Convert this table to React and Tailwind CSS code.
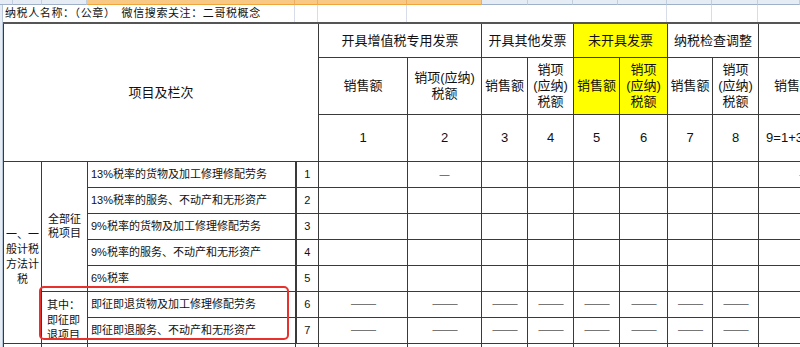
const colWidths = [38, 46, 208, 23, 89, 74, 46, 46, 46, 48, 45, 46, 84];

const cell = "border border-[#3a3a3a] p-0 text-center align-middle";
const yellow = "bg-[#ffff00]";

const items = [
  "13%税率的货物及加工修理修配劳务",
  "13%税率的服务、不动产和无形资产",
  "9%税率的货物及加工修理修配劳务",
  "9%税率的服务、不动产和无形资产",
  "6%税率",
];

// excel column header strip: [width, selected]
const strip = [
  [13, false], [29, false], [45, false],
  [208, true], [23, true], [89, true], [75, true],
  [46, false], [45, false], [45, false], [49, false], [45, false], [46, false], [42, false],
];

const Dash = () => <span className="text-[#777] text-[13px] tracking-[-1px]">——</span>;

const Empty = ({ n }) =>
  Array.from({ length: n }).map((_, i) => <td key={i} className={cell}></td>);

export default function App() {
  return (
    <div className="relative w-[800px] h-[347px] overflow-hidden bg-white text-[#111] font-['Liberation_Sans','Noto_Sans_CJK_SC',sans-serif]">
      {/* excel column headers */}
      <div className="flex h-[5px]">
        {strip.map(([w, sel], i) => (
          <div
            key={i}
            style={{ width: w }}
            className={
              sel
                ? "shrink-0 bg-[#f8c985] border-r border-r-[#eab060] border-b border-b-[#f0a43c]"
                : "shrink-0 bg-[#e6ecf4] border-r border-r-[#c3cfdf] border-b border-b-[#9fb1c8]"
            }
          />
        ))}
      </div>

      <div className="flex">
        <div className="w-[3px] shrink-0 bg-[#e6ecf4] border-r border-[#b7c6d9]" />
        <div className="w-[839px] shrink-0">
          {/* title row */}
          <div className="flex h-[17px] text-[11px] leading-[17px]">
            <div className="w-[292px] shrink-0 pl-[2px] whitespace-nowrap tracking-[0.6px] border-r border-[#d6dde8]">
              纳税人名称：（公章）　微信搜索关注：二哥税概念
            </div>
            <div className="w-[23px] shrink-0 border-r border-[#d6dde8]" />
            <div className="w-[89px] shrink-0 border-r border-[#d6dde8]" />
            <div className="w-[260px] shrink-0 border-r border-[#d6dde8]" />
            <div className="w-[45px] shrink-0 border-r border-[#d6dde8]" />
            <div className="w-[46px] shrink-0 border-r border-[#d6dde8]" />
          </div>

          <table className="table-fixed border-collapse w-[839px] text-[13px] border-t-2 border-t-[#555]">
            <colgroup>
              {colWidths.map((w, i) => (
                <col key={i} style={{ width: w }} />
              ))}
            </colgroup>
            <tbody>
              <tr className="h-[34px]">
                <td colSpan={4} rowSpan={3} className={cell + " border-t-2 border-t-[#555]"}>
                  项目及栏次
                </td>
                <td colSpan={2} className={cell + " border-t-2 border-t-[#555]"}>开具增值税专用发票</td>
                <td colSpan={2} className={cell + " border-t-2 border-t-[#555]"}>开具其他发票</td>
                <td colSpan={2} className={cell + " border-t-2 border-t-[#555] " + yellow}>未开具发票</td>
                <td colSpan={2} className={cell + " border-t-2 border-t-[#555]"}>纳税检查调整</td>
                <td className={cell + " border-t-2 border-t-[#555]"}></td>
              </tr>
              <tr className="h-[57px] leading-[16px]">
                <td className={cell}>销售额</td>
                <td className={cell}>销项(应纳)<br />税额</td>
                <td className={cell}>销售额</td>
                <td className={cell}>销项<br />(应纳)<br />税额</td>
                <td className={cell + " " + yellow}>销售额</td>
                <td className={cell + " " + yellow}>销项<br />(应纳)<br />税额</td>
                <td className={cell}>销售额</td>
                <td className={cell}>销项<br />(应纳)<br />税额</td>
                <td className={cell + " !text-left pl-[15px]"}>销售额</td>
              </tr>
              <tr className="h-[47px]">
                {[1, 2, 3, 4, 5, 6, 7, 8].map((n) => (
                  <td key={n} className={cell}>{n}</td>
                ))}
                <td className={cell + " !text-left pl-[7px] whitespace-nowrap"}>9=1+3+5+7</td>
              </tr>

              {items.map((text, i) => (
                <tr key={i} className="h-[26px] text-[11px]">
                  {i === 0 && (
                    <>
                      <td rowSpan={7} className={cell + " leading-[15px] text-[11px] pt-[9px]"}>
                        一、一<br />般计税<br />方法计<br />税
                      </td>
                      <td rowSpan={5} className={cell + " leading-[14px] text-[11px]"}>
                        全部征<br />税项目
                      </td>
                    </>
                  )}
                  <td className={cell + " !text-left pl-[3px] whitespace-nowrap border-r-2"}>{text}</td>
                  <td className={cell}>{i + 1}</td>
                  <td className={cell}></td>
                  <td className={cell}>{i === 0 ? <span className="text-[#555] text-[10px]">—</span> : null}</td>
                  <Empty n={6} />
                  <td className={cell}>{i === 0 ? <span className="text-[#555] text-[10px] pl-[8px]">—</span> : null}</td>
                </tr>
              ))}

              {["即征即退货物及加工修理修配劳务", "即征即退服务、不动产和无形资产"].map((text, i) => (
                <tr key={text} className="h-[26px] text-[11px]">
                  {i === 0 && (
                    <td rowSpan={2} className={cell + " !text-left pl-[5px] pt-[6px] leading-[15px]"}>
                      其中：<br />即征即<br />退项目
                    </td>
                  )}
                  <td className={cell + " !text-left pl-[3px] whitespace-nowrap border-r-2"}>{text}</td>
                  <td className={cell}>{i + 6}</td>
                  {Array.from({ length: 8 }).map((_, k) => (
                    <td key={k} className={cell}><Dash /></td>
                  ))}
                  <td className={cell}></td>
                </tr>
              ))}

              <tr className="h-[26px]">
                <Empty n={13} />
              </tr>
            </tbody>
          </table>
        </div>
      </div>

      {/* red highlight */}
      <div className="absolute left-[39px] top-[286px] w-[250px] h-[54px] border-2 border-[#e8302c] rounded-[5px] pointer-events-none" />
    </div>
  );
}
